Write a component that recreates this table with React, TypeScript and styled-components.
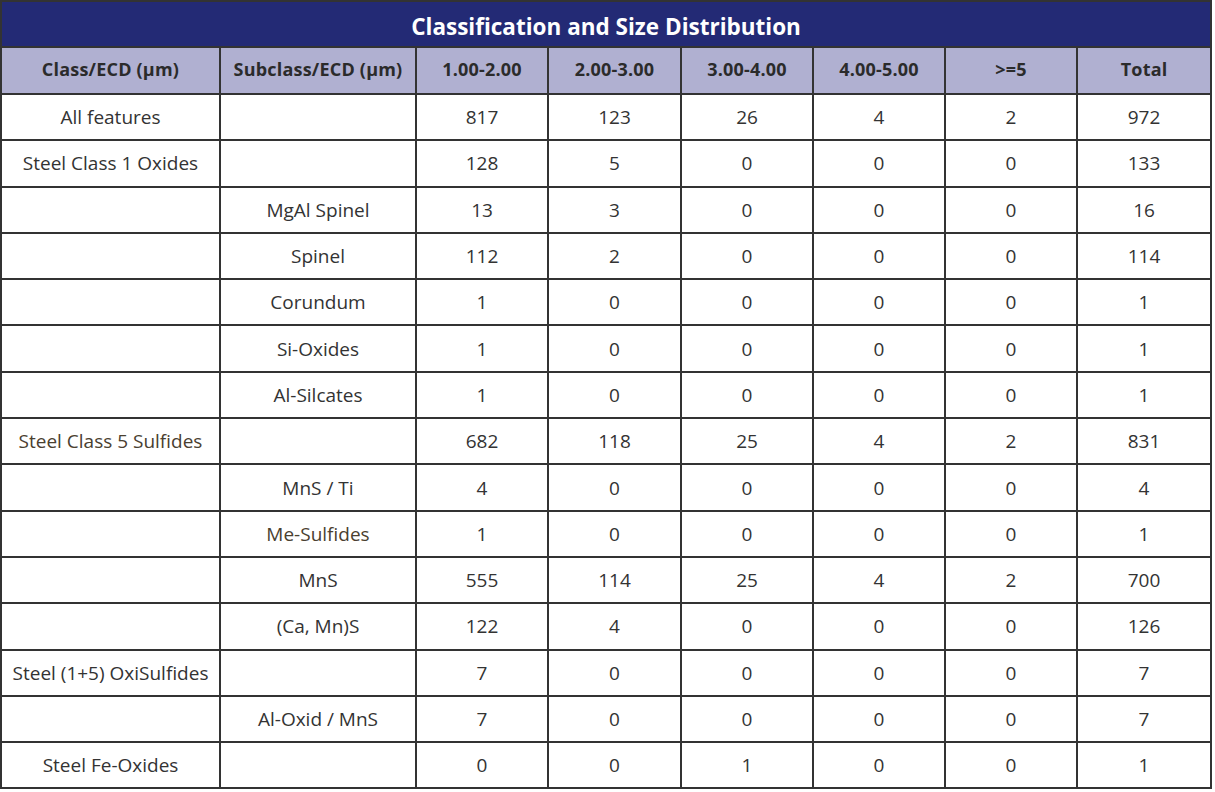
import React from 'react';
import styled, { createGlobalStyle } from 'styled-components';

const GlobalStyle = createGlobalStyle`
    html, body {
        margin: 0;
        padding: 0;
        background: #fff;
    }
`;

const Table = styled.table`
    width: 1210px;
    table-layout: fixed;
    border-collapse: collapse;
    font-family: 'Open Sans', Lato, sans-serif;
    color: #333;
`;

const TitleCell = styled.th`
    height: 40px;
    padding: 4px 0 0;
    background-color: #232a75;
    color: #fff;
    font-size: 22.5px;
    font-weight: 700;
    text-align: center;
    border: 2px solid #333;
`;

const HeadCell = styled.th`
    height: 41px;
    padding: 0 0 4px;
    background-color: #b0b0d1;
    color: #2b2b2b;
    font-size: 18px;
    font-weight: 700;
    letter-spacing: 0.2px;
    text-align: center;
    border: 2px solid #333;
`;

const Cell = styled.td<{ $tint?: boolean }>`
    height: 44.3px;
    padding: 0;
    font-size: 19px;
    font-weight: 400;
    text-align: center;
    border: 2px solid #333;
    color: ${(p) => (p.$tint ? '#4a4030' : '#333')};
`;

const widths = [219, 196, 132, 133, 132, 132, 132, 134];
const heads = ['Class/ECD (µm)', 'Subclass/ECD (µm)', '1.00-2.00', '2.00-3.00', '3.00-4.00', '4.00-5.00', '>=5', 'Total'];

type Row = { cls: string; sub: string; vals: number[]; tint?: boolean };

const rows: Row[] = [
    { cls: 'All features', sub: '', vals: [817, 123, 26, 4, 2, 972] },
    { cls: 'Steel Class 1 Oxides', sub: '', vals: [128, 5, 0, 0, 0, 133] },
    { cls: '', sub: 'MgAl Spinel', vals: [13, 3, 0, 0, 0, 16] },
    { cls: '', sub: 'Spinel', vals: [112, 2, 0, 0, 0, 114] },
    { cls: '', sub: 'Corundum', vals: [1, 0, 0, 0, 0, 1] },
    { cls: '', sub: 'Si-Oxides', vals: [1, 0, 0, 0, 0, 1] },
    { cls: '', sub: 'Al-Silcates', vals: [1, 0, 0, 0, 0, 1] },
    { cls: 'Steel Class 5 Sulfides', sub: '', vals: [682, 118, 25, 4, 2, 831], tint: true },
    { cls: '', sub: 'MnS / Ti', vals: [4, 0, 0, 0, 0, 4] },
    { cls: '', sub: 'Me-Sulfides', vals: [1, 0, 0, 0, 0, 1], tint: true },
    { cls: '', sub: 'MnS', vals: [555, 114, 25, 4, 2, 700] },
    { cls: '', sub: '(Ca, Mn)S', vals: [122, 4, 0, 0, 0, 126] },
    { cls: 'Steel (1+5) OxiSulfides', sub: '', vals: [7, 0, 0, 0, 0, 7] },
    { cls: '', sub: 'Al-Oxid / MnS', vals: [7, 0, 0, 0, 0, 7] },
    { cls: 'Steel Fe-Oxides', sub: '', vals: [0, 0, 1, 0, 0, 1] },
];

export default function App() {
    return (
        <>
            <GlobalStyle />
            <Table>
                <colgroup>
                    {widths.map((w, i) => (
                        <col key={i} style={{ width: w }} />
                    ))}
                </colgroup>
                <thead>
                    <tr>
                        <TitleCell colSpan={8}>Classification and Size Distribution</TitleCell>
                    </tr>
                    <tr>
                        {heads.map((h) => (
                            <HeadCell key={h}>{h}</HeadCell>
                        ))}
                    </tr>
                </thead>
                <tbody>
                    {rows.map((r, i) => (
                        <tr key={i}>
                            <Cell $tint={r.tint && !!r.cls}>{r.cls}</Cell>
                            <Cell $tint={r.tint && !!r.sub}>{r.sub}</Cell>
                            {r.vals.map((v, j) => (
                                <Cell key={j}>{v}</Cell>
                            ))}
                        </tr>
                    ))}
                </tbody>
            </Table>
        </>
    );
}
